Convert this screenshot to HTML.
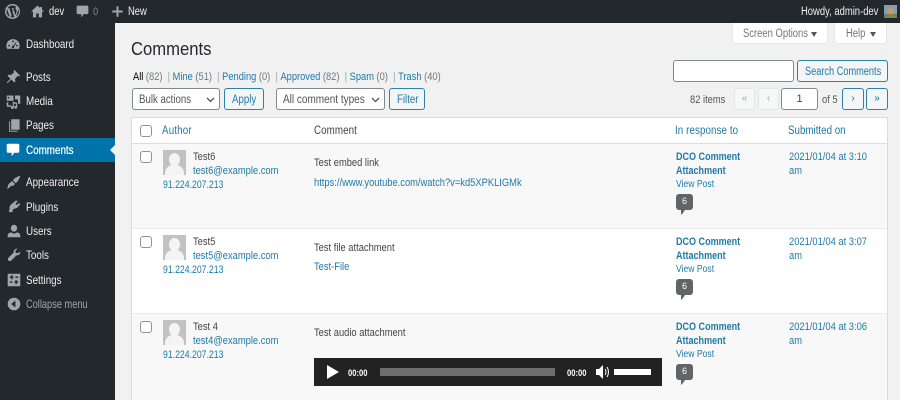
<!DOCTYPE html>
<html><head><meta charset="utf-8"><style>
*{box-sizing:border-box}
html,body{margin:0;padding:0;width:900px;height:400px;overflow:hidden;background:#f1f1f1;font:12px "Liberation Sans",sans-serif;color:#444}
.t{position:absolute;white-space:nowrap;line-height:16px;transform:scaleX(.85);transform-origin:0 50%}
.k{transform:scaleX(.82)}
.ip{transform:scaleX(.79)}
.l{color:#1f7aa6}
.g{color:#555}
.m{position:absolute;left:26px;color:#eee;font-size:12px;line-height:16px;white-space:nowrap;transform:scaleX(.82);transform-origin:0 50%}
.i{position:absolute;fill:#a0a5aa}
.box{position:absolute;background:#fff;border:1px solid #7e8993;border-radius:3px}
.btn{position:absolute;background:#f3f5f6;border:1px solid #2b83a8;border-radius:3px}
.off{border-color:#e4e6e8;background:#f6f7f7;color:#a0a5aa;text-align:center;font-size:10px;line-height:19px}
.nav{color:#0071a1;text-align:center;font-size:10px;line-height:19px}
.cb{position:absolute;left:140px;width:12px;height:12px;background:#fff;border:1px solid #8f949a;border-radius:3px}
.av{position:absolute;left:163px;width:23px;height:25px;background:#c2c2c2;overflow:hidden}
.av:before{content:"";position:absolute;left:6px;top:3px;width:11px;height:13px;border-radius:50%;background:#f4f4f4}
.av:after{content:"";position:absolute;left:2px;top:15px;width:19px;height:14px;border-radius:8px 8px 0 0;background:#f4f4f4}
.b{position:absolute;left:676px;width:17px;height:16px;background:#626568;border-radius:3px;color:#fff;font-size:9px;line-height:15px;text-align:center}
.b:after{content:"";position:absolute;left:5px;top:16px;border:2px solid transparent;border-top:3px solid #626568;border-left:2px solid #626568}
</style></head><body>
<div style="position:absolute;left:0;top:0;width:900px;height:23px;background:#23282d"></div>
<div style="position:absolute;left:0;top:23px;width:115px;height:377px;background:#23282d"></div>

<svg class="i" style="left:5px;top:4px" width="15" height="15" viewBox="0 0 20 20"><path fill-rule="evenodd" d="M10 0a10 10 0 1 0 0 20a10 10 0 0 0 0-20zM2 10c0-1.200.3-2.300.7-3.300l3.800 10.500A8 8 0 0 1 2 10zm8 8c-.8 0-1.500-.1-2.200-.3l2.300-6.800 2.400 6.500A8 8 0 0 1 10 18zm1.100-11.800l2.900 8.600.8-2.700c.4-1.100.6-1.900.6-2.600 0-1-.4-1.700-.7-2.200-.4-.7-.8-1.200-.8-1.900 0-.8.600-1.400 1.400-1.400h.1A8 8 0 0 0 3.300 5.600h1.600l2 .1-.1.500-.9.100 2.900 8.600 1.700-5.200-1.200-3.400-.9-.1v-.5l2.200.1 2-.1v.5zM14.700 16.900l2.400-7c.5-1.100.6-2 .6-2.800l-.1-.8A8 8 0 0 1 14.700 16.900z"/></svg>
<svg class="i" style="left:31px;top:5px" width="13" height="13" viewBox="0 0 20 20"><path d="M10 1L0 10h3v9h5v-6h4v6h5v-9h3l-3-2.700V3h-3v1.600z"/></svg>
<div class="t k" style="left:49px;top:4px;color:#eee;font-size:11.500px">dev</div>
<svg class="i" style="left:76px;top:5px" width="13" height="13" viewBox="0 0 20 20"><path d="M3 1h14a2 2 0 0 1 2 2v9a2 2 0 0 1-2 2h-5l-4 5v-5H3a2 2 0 0 1-2-2V3a2 2 0 0 1 2-2z"/></svg>
<div class="t" style="left:93px;top:4px;color:#82878c;font-size:11px">0</div>
<svg class="i" style="left:111px;top:5px" width="13" height="13" viewBox="0 0 20 20"><path d="M8.500 2h3v6.500H18v3h-6.500V18h-3v-6.500H2v-3h6.500z"/></svg>
<div class="t k" style="left:128px;top:4px;color:#eee;font-size:11.500px">New</div>
<div class="t k" style="left:801px;top:4px;color:#eee;font-size:11.500px">Howdy, admin-dev</div>
<svg style="position:absolute;left:884px;top:5px" width="13" height="13" viewBox="0 0 13 13"><rect width="13" height="13" fill="#7fa0b4"/><rect y="9" width="13" height="4" fill="#6d7f55"/><circle cx="6.500" cy="5.500" r="3.200" fill="#c99a6c"/><path d="M2 13c0-3 2-4 4.500-4s4.500 1 4.500 4z" fill="#7f8a50"/></svg>

<!-- sidebar -->
<svg class="i" style="left:6px;top:37px" width="14" height="14" viewBox="0 0 20 20"><path fill-rule="evenodd" d="M10 3a9.500 9.500 0 0 0-9.500 9.500c0 1.700.4 3.200 1.200 4.500h16.600c.8-1.300 1.200-2.800 1.200-4.500A9.500 9.500 0 0 0 10 3zm0 2a1.300 1.300 0 1 1 0 2.600A1.300 1.300 0 0 1 10 5zM4.500 11a1.300 1.300 0 1 1 0 2.600a1.300 1.300 0 0 1 0-2.600zm11 0a1.300 1.300 0 1 1 0 2.600a1.300 1.300 0 0 1 0-2.600zM14 7.500l1 .8-3.500 5.200a1.800 1.800 0 1 1-1.300-.9z"/></svg>
<div class="m" style="top:36px">Dashboard</div>
<svg class="i" style="left:6px;top:69px" width="15" height="15" viewBox="0 0 20 20"><path d="M11 1l8 8-2 1-1-1-4 4 .5 3.500L11 18l-4-4-5 5-1-1 5-5-4-4 1.500-1.500L7 8l4-4-1-1z"/></svg>
<div class="m" style="top:69px">Posts</div>
<svg class="i" style="left:6px;top:94px" width="15" height="15" viewBox="0 0 20 20"><path fill-rule="evenodd" d="M1 2h9v7H1zm2.500 1.800a1.200 1.200 0 1 0 0 2.400a1.200 1.200 0 0 0 0-2.400zM12 2h7v11h-3V9a2 2 0 0 0-2-2h-2zM1 11h2v4h4v2H1zm8-1l6 2v5.500a2 2 0 1 1-1.500-1.900V13.500L10.500 12.500V18a2 2 0 1 1-1.500-1.900z"/></svg>
<div class="m" style="top:93px">Media</div>
<svg class="i" style="left:7px;top:118px" width="14" height="15" viewBox="0 0 20 20"><path d="M6 1h12v15H6zM3 4v15h12v-1.500H4.500V4z"/></svg>
<div class="m" style="top:117px">Pages</div>
<div style="position:absolute;left:0;top:138px;width:115px;height:24px;background:#0073aa"></div>
<svg style="position:absolute;left:6px;top:143px;fill:#fff" width="14" height="14" viewBox="0 0 20 20"><path d="M3 1h14a2 2 0 0 1 2 2v9a2 2 0 0 1-2 2h-5l-4 5v-5H3a2 2 0 0 1-2-2V3a2 2 0 0 1 2-2z"/></svg>
<div class="m" style="top:142px;color:#fff;-webkit-text-stroke:.2px #fff">Comments</div>
<div style="position:absolute;left:110px;top:145px;border:5px solid transparent;border-left:0;border-right:5px solid #f1f1f1"></div>
<svg class="i" style="left:6px;top:175px" width="15" height="15" viewBox="0 0 20 20"><path d="M19 2l-1-1-6 3-3 3 4 4 3-3zM8 8l4 4-2 2c-2 1-3 0-4 1s-1 3-5 3c2-2 1-3 2-5s2-2 3-3z"/></svg>
<div class="m" style="top:174px">Appearance</div>
<svg class="i" style="left:7px;top:199px" width="14" height="15" viewBox="0 0 20 20"><path d="M13 1l2 2-3 3 2 2 3-3 2 2-3 3c-1 2-3 3-6 3l-2 2v3H3v-3l1-1c-1-3 0-5 2-7z"/></svg>
<div class="m" style="top:199px">Plugins</div>
<svg class="i" style="left:7px;top:224px" width="14" height="14" viewBox="0 0 20 20"><path d="M10 1a4.500 5 0 1 1 0 10a4.500 5 0 0 1 0-10zM1 19v-3c0-2 2-3.500 5-4 1 1 2.500 1.500 4 1.500s3-.5 4-1.500c3 .5 5 2 5 4v3z"/></svg>
<div class="m" style="top:223px">Users</div>
<svg class="i" style="left:7px;top:248px" width="14" height="14" viewBox="0 0 20 20"><path d="M19 5c.5 3-2 6-5.500 5.500L6 18c-1 1-3 1-4 0s-1-3 0-4l7.500-7.500C9 3 12 .5 15 1l-3 3 .5 3 3 .5z"/></svg>
<div class="m" style="top:247px">Tools</div>
<svg class="i" style="left:7px;top:273px" width="14" height="14" viewBox="0 0 20 20"><path fill-rule="evenodd" d="M1 1h18v18H1zm3 4v2h2v2h2V7h1V5H8V3H6v2zm8 0v2h4V5zM4 12v2h4v-2zm7 0v2h1v2h2v-2h2v-2h-2v-2h-2v2z"/></svg>
<div class="m" style="top:272px">Settings</div>
<svg class="i" style="left:7px;top:297px" width="14" height="14" viewBox="0 0 20 20"><path fill-rule="evenodd" d="M10 1a9 9 0 1 1 0 18a9 9 0 0 1 0-18zm2 4L6 10l6 5z"/></svg>
<div class="m" style="top:296px;color:#a0a5aa;font-size:12px;transform:scaleX(.77)">Collapse menu</div>

<!-- screen options -->
<div style="position:absolute;left:732px;top:23px;width:96px;height:21px;background:#fff;border:1px solid #e4e6e8;border-top:0;border-radius:0 0 4px 4px"></div>
<div class="t k" style="left:743px;top:26px;color:#72777c;font-size:11.500px">Screen Options</div>
<div style="position:absolute;left:811px;top:32px;border:3px solid transparent;border-top:5px solid #555;border-bottom:0"></div>
<div style="position:absolute;left:834px;top:23px;width:53px;height:21px;background:#fff;border:1px solid #e4e6e8;border-top:0;border-radius:0 0 4px 4px"></div>
<div class="t k" style="left:846px;top:26px;color:#72777c;font-size:11.500px">Help</div>
<div style="position:absolute;left:870px;top:32px;border:3px solid transparent;border-top:5px solid #555;border-bottom:0"></div>

<div class="t" style="left:131px;top:37px;font-size:18.500px;line-height:24px;color:#23282d;transform:scaleX(.9)">Comments</div>
<div class="t g" style="left:133px;top:69px;font-size:10.800px;transform:scaleX(.862)"><span style="color:#000">All</span> <span style="color:#72777c">(82)</span> <span style="color:#a0a5aa">&nbsp;|&nbsp;</span><span class="l">Mine</span> <span style="color:#72777c">(51)</span> <span style="color:#a0a5aa">&nbsp;|&nbsp;</span><span class="l">Pending</span> <span style="color:#72777c">(0)</span> <span style="color:#a0a5aa">&nbsp;|&nbsp;</span><span class="l">Approved</span> <span style="color:#72777c">(82)</span> <span style="color:#a0a5aa">&nbsp;|&nbsp;</span><span class="l">Spam</span> <span style="color:#72777c">(0)</span> <span style="color:#a0a5aa">&nbsp;|&nbsp;</span><span class="l">Trash</span> <span style="color:#72777c">(40)</span></div>

<div class="box" style="left:132px;top:88px;width:88px;height:22px"></div>
<div class="t g" style="left:139px;top:92px;font-size:11.500px;transform:scaleX(.84)">Bulk actions</div>
<svg style="position:absolute;left:206px;top:97px" width="9" height="6"><path d="M1 1l3.500 3.500L8 1" fill="none" stroke="#555" stroke-width="1.300"/></svg>
<div class="btn" style="left:224px;top:88px;width:40px;height:22px"></div>
<div class="t l" style="left:232px;top:92px;font-size:11.500px;transform:scaleX(.84)">Apply</div>
<div class="box" style="left:276px;top:88px;width:109px;height:22px"></div>
<div class="t g" style="left:283px;top:92px;font-size:11.500px;transform:scaleX(.87)">All comment types</div>
<svg style="position:absolute;left:371px;top:97px" width="9" height="6"><path d="M1 1l3.500 3.500L8 1" fill="none" stroke="#555" stroke-width="1.300"/></svg>
<div class="btn" style="left:389px;top:88px;width:36px;height:22px"></div>
<div class="t l" style="left:397px;top:92px;font-size:11.500px;transform:scaleX(.84)">Filter</div>

<div class="box" style="left:673px;top:60px;width:121px;height:22px"></div>
<div class="btn" style="left:797px;top:60px;width:91px;height:22px"></div>
<div class="t l" style="left:805px;top:64px;font-size:11.500px;transform:scaleX(.8)">Search Comments</div>
<div class="t g" style="left:690px;top:92px;font-size:11px">82 items</div>
<div class="btn off" style="left:734px;top:88px;width:21px;height:22px">«</div>
<div class="btn off" style="left:758px;top:88px;width:21px;height:22px">‹</div>
<div class="box" style="left:781px;top:88px;width:37px;height:22px;text-align:center;line-height:20px;font-size:11px">1</div>
<div class="t g" style="left:822px;top:92px;font-size:11px">of 5</div>
<div class="btn nav" style="left:842px;top:88px;width:22px;height:22px">›</div>
<div class="btn nav" style="left:866px;top:88px;width:22px;height:22px">»</div>

<!-- table -->
<div style="position:absolute;left:131px;top:117px;width:757px;height:283px;background:#fff;border:1px solid #dcdcde;border-bottom:0"></div>
<div style="position:absolute;left:132px;top:143px;width:755px;height:1px;background:#dcdcde"></div>
<div style="position:absolute;left:132px;top:144px;width:755px;height:84px;background:#f8f8f8"></div>
<div style="position:absolute;left:132px;top:228px;width:755px;height:1px;background:#eaeaea"></div>
<div style="position:absolute;left:132px;top:313px;width:755px;height:87px;background:#f8f8f8;border-top:1px solid #eaeaea"></div>

<div class="cb" style="top:125px"></div>
<div class="t l" style="left:162px;top:123px;font-size:11.500px;letter-spacing:.2px">Author</div>
<div class="t" style="left:314px;top:123px;font-size:11.500px;letter-spacing:.1px">Comment</div>
<div class="t l" style="left:675px;top:123px;font-size:11.500px;letter-spacing:.1px">In response to</div>
<div class="t l" style="left:788px;top:123px;font-size:11.500px">Submitted on</div>

<!-- row 1 -->
<div class="cb" style="top:151px"></div><div class="av" style="top:150px"></div>
<div class="t" style="left:193px;top:149px;font-size:11px">Test6</div>
<div class="t l" style="left:193px;top:163px;font-size:11px">test6@example.com</div>
<div class="t l ip" style="left:163px;top:177px;font-size:11px">91.224.207.213</div>
<div class="t" style="left:314px;top:155px;font-size:11px">Test embed link</div>
<div class="t l" style="left:314px;top:175px;font-size:11px">https://www.youtube.com/watch?v=kd5XPKLIGMk</div>
<div class="t l k" style="left:676px;top:149px;font-size:11px;font-weight:700">DCO Comment</div>
<div class="t l k" style="left:676px;top:163px;font-size:11px;font-weight:700">Attachment</div>
<div class="t l k" style="left:676px;top:176px;font-size:10.500px">View Post</div>
<div class="b" style="top:194px">6</div>
<div class="t l" style="left:789px;top:149px;font-size:11px">2021/01/04 at 3:10</div>
<div class="t l" style="left:789px;top:163px;font-size:11px">am</div>

<!-- row 2 -->
<div class="cb" style="top:236px"></div><div class="av" style="top:235px"></div>
<div class="t" style="left:193px;top:234px;font-size:11px">Test5</div>
<div class="t l" style="left:193px;top:248px;font-size:11px">test5@example.com</div>
<div class="t l ip" style="left:163px;top:262px;font-size:11px">91.224.207.213</div>
<div class="t" style="left:314px;top:240px;font-size:11px">Test file attachment</div>
<div class="t l" style="left:314px;top:259px;font-size:11px">Test-File</div>
<div class="t l k" style="left:676px;top:234px;font-size:11px;font-weight:700">DCO Comment</div>
<div class="t l k" style="left:676px;top:248px;font-size:11px;font-weight:700">Attachment</div>
<div class="t l k" style="left:676px;top:261px;font-size:10.500px">View Post</div>
<div class="b" style="top:279px">6</div>
<div class="t l" style="left:789px;top:234px;font-size:11px">2021/01/04 at 3:07</div>
<div class="t l" style="left:789px;top:248px;font-size:11px">am</div>

<!-- row 3 -->
<div class="cb" style="top:321px"></div><div class="av" style="top:320px"></div>
<div class="t" style="left:193px;top:319px;font-size:11px">Test 4</div>
<div class="t l" style="left:193px;top:333px;font-size:11px">test4@example.com</div>
<div class="t l ip" style="left:163px;top:347px;font-size:11px">91.224.207.213</div>
<div class="t" style="left:314px;top:325px;font-size:11px">Test audio attachment</div>
<div style="position:absolute;left:314px;top:358px;width:348px;height:28px;background:#222"></div>
<svg style="position:absolute;left:327px;top:365px" width="12" height="14"><path d="M0 0l12 7L0 14z" fill="#fff"/></svg>
<div class="t" style="left:348px;top:365px;color:#fff;font-size:9px;font-weight:700">00:00</div>
<div style="position:absolute;left:380px;top:368px;width:175px;height:8px;background:#6e6e6e"></div>
<div class="t" style="left:567px;top:365px;color:#fff;font-size:9px;font-weight:700">00:00</div>
<svg style="position:absolute;left:596px;top:365px" width="13" height="14"><path d="M0 4h3l4-4v14l-4-4H0z" fill="#fff"/><path d="M9 4q2 3 0 6M11 2q3 5 0 10" fill="none" stroke="#fff"/></svg>
<div style="position:absolute;left:614px;top:369px;width:37px;height:6px;background:#fff"></div>
<div class="t l k" style="left:676px;top:319px;font-size:11px;font-weight:700">DCO Comment</div>
<div class="t l k" style="left:676px;top:333px;font-size:11px;font-weight:700">Attachment</div>
<div class="t l k" style="left:676px;top:346px;font-size:10.500px">View Post</div>
<div class="b" style="top:364px">6</div>
<div class="t l" style="left:789px;top:319px;font-size:11px">2021/01/04 at 3:06</div>
<div class="t l" style="left:789px;top:333px;font-size:11px">am</div>
</body></html>
